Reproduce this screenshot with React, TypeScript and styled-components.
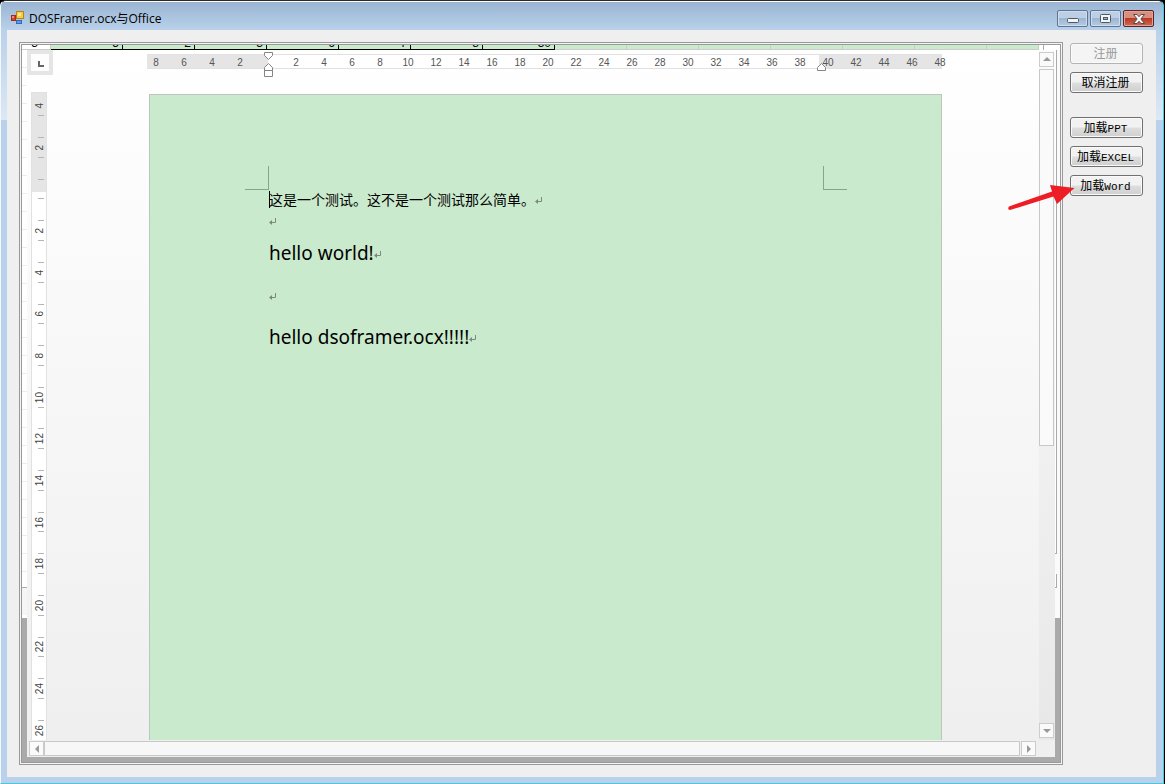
import React from "react";
import styled, { createGlobalStyle } from "styled-components";

const GlobalStyle = createGlobalStyle`
  * { box-sizing: border-box; }
  body {
    margin: 0;
    background: #000;
    font-family: "Open Sans", "Noto Sans CJK SC", sans-serif;
    color: #000;
  }
  p, h1 { margin: 0; font-weight: 400; }
`;

const Window = styled.div`
  display: flex;
  flex-direction: column;
  min-height: 100vh;
  margin-right: 1px;
  padding: 0 7px 6px 6px;
  border: 1px solid #46c8de;
  border-top-color: #2b2b2b;
  border-left-color: #f4f8fc;
  background:
    linear-gradient(#fff, #fff) 0 0 / 100% 1px no-repeat,
    linear-gradient(#99b4d1, #b9d1ea 29px) 0 0 / 100% 29px no-repeat,
    linear-gradient(#b9d1ea, #dce8f5) 0 29px / 100% 90px no-repeat,
    #b9d1ea;
  border-radius: 6px 6px 0 0;
`;

const TitleBar = styled.header`
  display: flex;
  align-items: flex-start;
  height: 29px;
  padding: 9px 2px 0 4px;
`;

const Title = styled.h1`
  flex: 1;
  margin-left: 5px;
  font-size: 12px;
  line-height: 17px;
`;

const WindowControls = styled.div`
  display: flex;
  gap: 2px;
`;

const ControlButton = styled.button<{ $close?: boolean }>`
  display: flex;
  align-items: center;
  justify-content: center;
  width: 31px;
  height: 17px;
  padding: 0;
  border: 1px solid ${(p) => (p.$close ? "#5c2320" : "#5d7590")};
  border-radius: 2px;
  box-shadow: inset 0 0 0 1px ${(p) => (p.$close ? "#dfa399" : "#cfdeee")};
  background: ${(p) =>
    p.$close
      ? "linear-gradient(#d98e80 0 45%, #b93a25 50%, #cf6a50)"
      : "linear-gradient(#bccfe4 0 45%, #9db5d0 50%, #b4cbe4)"};
`;

const Client = styled.main`
  display: flex;
  flex: 1;
  gap: 7px;
  padding: 12px 13px 12px 12px;
  background: #efefef;
`;

const Host = styled.section`
  display: flex;
  flex: 1;
  flex-direction: column;
  min-width: 0;
  border: 3px double #999;
  background: #f4f4f4;
`;

const SheetStrip = styled.div`
  display: flex;
  height: 5px;
  overflow: hidden;
  background: #fff;
  font: 12px/12px "Liberation Sans", sans-serif;
`;

const SheetCell = styled.span<{ $kind?: "header" | "blank" }>`
  display: flex;
  flex: none;
  align-items: flex-end;
  justify-content: flex-end;
  width: ${(p) => (p.$kind === "header" ? 29 : 72)}px;
  padding-right: ${(p) => (p.$kind === "header" ? 12 : 3)}px;
  border: solid ${(p) => (p.$kind ? "#ccc" : "#000")};
  border-width: 0 1px 1px 0;
  background: ${(p) => (p.$kind === "header" ? "#fff" : "#caeacd")};
`;

const SheetFill = styled.span`
  flex: 1;
  border: solid #ccc;
  border-width: 0 1px 1px 0;
  background: #caeacd;
`;

const SheetEdge = styled.span`
  flex: none;
  width: 21px;
  border-left: 4px solid #fff;
  box-shadow: inset 1px 0 #aaa;
`;

const HostBody = styled.div`
  display: flex;
  flex: 1;
`;

const Strip = styled.div`
  display: flex;
  flex-direction: column;
  width: 5px;
  background: #aaa;
`;

const StripRows = styled.div`
  height: 538px;
  border-bottom: 1px solid #aaa;
  background: repeating-linear-gradient(#fff 0 17px, #ececec 17px 18px);
`;

const StripBar = styled.div<{ $height: number }>`
  height: ${(p) => p.$height}px;
  margin-right: 3px;
  border: solid #aaa;
  border-width: 0 1px 1px 0;
  background: #fff;
`;

const StripSide = styled.div`
  display: flex;
  flex-direction: column;
  gap: 20px;
  height: 568px;
  background: #fafafa;
`;

const StripFoot = styled.div`
  height: 30px;
  border-bottom: 3px solid #fff;
  background: #f5f5f5;
`;

const Viewer = styled.div`
  display: flex;
  flex: 1;
  flex-direction: column;
  min-width: 0;
  margin-bottom: 5px;
  box-shadow: 0 5px #aaa;
`;

const Workspace = styled.div`
  display: flex;
  flex: 1;
  background: linear-gradient(#fff, #efefef);
`;

const RulerColumn = styled.div`
  display: flex;
  flex-direction: column;
  gap: 17px;
  width: 26px;
`;

const TabSelector = styled.button`
  display: flex;
  align-items: center;
  justify-content: center;
  height: 25px;
  padding: 2px 0 0 2px;
  border: 4px solid #e5e5e5;
  background: #fdfdfd;
`;

const VerticalRuler = styled.div`
  flex: 1;
  display: flex;
  flex-direction: column;
  width: 16px;
  margin-left: 4px;
  overflow: hidden;
  border: solid #e1e1e1;
  border-width: 1px 1px 0;
  background: linear-gradient(#e5e5e5 0 99px, #fff 99px);
`;

const VerticalScale = styled.div`
  display: flex;
  flex: 1;
  flex-direction: column;
  margin: -8px 0 -11px;
`;

const VerticalUnit = styled.div`
  flex: 1;
  display: flex;
  align-items: center;
  justify-content: center;
`;

const VerticalTicks = styled.span<{ $first: boolean }>`
  display: flex;
  align-items: center;
  justify-content: center;
  width: 6px;
  height: 50%;
  margin-left: 4px;
  border: solid #b5b5b5;
  border-width: ${(p) => (p.$first ? 0 : 1)}px 0 1px;
`;

const VerticalNumber = styled.span`
  margin-left: -2px;
  writing-mode: vertical-rl;
  transform: rotate(180deg);
  font: 10px/12px "Liberation Sans", sans-serif;
  color: #444;
`;

const Canvas = styled.div`
  flex: 1;
  display: flex;
  justify-content: center;
  min-width: 0;
  padding: 4px 3px 0 0;
`;

const PaperColumn = styled.div`
  display: flex;
  flex-direction: column;
  gap: 25px;
  width: 795px;
`;

const HorizontalRuler = styled.div`
  position: relative;
  display: flex;
  height: 15px;
  border: solid #e1e1e1;
  border-width: 1px 0;
  background: linear-gradient(90deg, #e5e5e5 0 121px, #fff 121px 672px, #e5e5e5 672px);
`;

const HorizontalScale = styled.div`
  display: flex;
  margin: 0 -12px 0 -5px;
`;

const HorizontalNumber = styled.span`
  width: 28px;
  text-align: center;
  font: 10px/15px "Liberation Sans", sans-serif;
  color: #555;
`;

const Marker = styled.svg<{ $x: number; $y: number }>`
  position: absolute;
  left: ${(p) => p.$x}px;
  top: ${(p) => p.$y}px;
`;

const Paper = styled.article`
  flex: 1;
  margin-left: 2px;
  padding-top: 71px;
  border: solid #bfc4bf;
  border-width: 1px 1px 0;
  background: #caeacd;
`;

const CropRow = styled.div`
  display: flex;
  justify-content: space-between;
  padding: 0 94px 0 95px;
`;

const CropMark = styled.span<{ $side: "left" | "right" }>`
  width: 24px;
  height: 24px;
  border: solid #8aa38d;
  border-width: ${(p) => (p.$side === "left" ? "0 1px 1px 0" : "0 0 1px 1px")};
`;

const TextBody = styled.div`
  padding-left: 119px;
`;

const Paragraph = styled.p<{ $large?: boolean }>`
  display: flex;
  align-items: center;
  height: ${(p) => (p.$large ? 42 : 21)}px;
  padding-bottom: ${(p) => (p.$large ? 0 : 3)}px;
  font-family: ${(p) =>
    p.$large ? '"Noto Sans", sans-serif' : '"Noto Sans CJK SC", sans-serif'};
  font-size: ${(p) => (p.$large ? 19 : 14)}px;
  line-height: 18px;
  white-space: nowrap;
`;

const Caret = styled.span`
  width: 1px;
  height: 17px;
  margin-right: -1px;
  background: #000;
`;

const ParagraphMark = styled.svg`
  margin-top: 4px;
`;

const VerticalScroll = styled.div`
  display: flex;
  flex-direction: column;
  width: 16px;
  padding: 2px 1px 2px 0;
  background: linear-gradient(#fbfbfb, #e8e8e8);
`;

const HorizontalScroll = styled.div`
  display: flex;
  height: 17px;
  padding: 1px 19px 1px 2px;
  background: #efefef;
`;

const ScrollButton = styled.button`
  display: flex;
  flex: none;
  align-items: center;
  justify-content: center;
  width: 15px;
  height: 15px;
  padding: 0;
  border: 1px solid #ccc;
  background: #fafafa;
`;

const VerticalThumb = styled.div`
  flex: 376;
  margin-top: 2px;
  border: 1px solid #c8c8c8;
  background: #fafafa;
`;

const VerticalTrack = styled.div`
  flex: 278;
`;

const HorizontalThumb = styled.div`
  flex: 1;
  margin-right: 1px;
  border: 1px solid #c8c8c8;
  background: #f7f7f7;
`;

const Actions = styled.aside`
  display: flex;
  flex-direction: column;
  gap: 24px;
  width: 73px;
  padding-top: 1px;
`;

const ActionGroup = styled.div`
  display: flex;
  flex-direction: column;
  gap: 8px;
`;

const ActionSlot = styled.div`
  position: relative;
`;

const ActionButton = styled.button`
  display: block;
  width: 100%;
  height: 21px;
  padding: 0 2px 2px 0;
  border: 1px solid #707070;
  border-radius: 3px;
  box-shadow: inset 0 0 0 1px #fafafa;
  background: linear-gradient(#f2f2f2 0 48%, #dedede 52%, #cfcfcf);
  font: 12px/17px "Noto Sans CJK SC", sans-serif;
  color: #000;
  white-space: nowrap;
  &:disabled {
    border-color: #b0b4b4;
    background: #f4f4f4;
    color: #9a9a9a;
  }
`;

const Latin = styled.span`
  font: 11px/12px "Liberation Mono", monospace;
`;

const Pointer = styled.svg`
  position: absolute;
  left: -64px;
  top: 6px;
  pointer-events: none;
`;

const horizontalLabels = Array.from({ length: 29 }, (_, i) => Math.abs(i * 2 - 8));
const verticalLabels = Array.from({ length: 16 }, (_, i) => Math.abs(i * 2 - 4));
const sheetValues = ["5", "2", "3", "6", "7", "8", "30"];

const arrows = {
  up: "M0 5 4 1 8 5Z",
  down: "M0 2 4 6 8 2Z",
  left: "M6 0 2 4 6 8Z",
  right: "M2 0 6 4 2 8Z",
};

function Scroller({ direction }: { direction: keyof typeof arrows }) {
  return (
    <ScrollButton aria-label={`Scroll ${direction}`}>
      <svg width="8" height="8" viewBox="0 0 8 8">
        <path d={arrows[direction]} fill="#999" />
      </svg>
    </ScrollButton>
  );
}

function ReturnMark() {
  return (
    <ParagraphMark width="8" height="8" viewBox="0 0 8 8" aria-hidden="true">
      <path d="M6.5 0V4.5H2" fill="none" stroke="#7c8a7e" />
      <path d="M0 4.5 3 2V7Z" fill="#7c8a7e" />
    </ParagraphMark>
  );
}

export default function App() {
  return (
    <>
      <GlobalStyle />
      <Window>
        <TitleBar>
          <svg width="13" height="15" viewBox="0 0 13 15" aria-hidden="true">
            <rect x="5.5" y="1.5" width="7" height="7" fill="#fbc93d" stroke="#b5851c" />
            <rect x="7" y="3" width="3" height="3" fill="#fde88f" />
            <rect x="0.5" y="5.5" width="4" height="5" fill="#d8402c" stroke="#a52a1c" />
            <rect x="1" y="6" width="2" height="2" fill="#f08a78" />
            <rect x="5.5" y="10.5" width="5" height="3" fill="#5c9bea" stroke="#3568b8" />
          </svg>
          <Title>DOSFramer.ocx与Office</Title>
          <WindowControls>
            <ControlButton aria-label="Minimize">
              <svg width="12" height="9" viewBox="0 0 12 9">
                <rect x="0.5" y="4.5" width="11" height="4" rx="1" fill="#f4f4f4" stroke="#4c5866" />
              </svg>
            </ControlButton>
            <ControlButton aria-label="Restore">
              <svg width="11" height="9" viewBox="0 0 11 9">
                <rect x="0.5" y="0.5" width="10" height="8" rx="1" fill="#f4f4f4" stroke="#4c5866" />
                <rect x="3.5" y="3.5" width="4" height="2" fill="#9db5d0" stroke="#4c5866" />
              </svg>
            </ControlButton>
            <ControlButton $close aria-label="Close">
              <svg width="12" height="10" viewBox="0 0 12 10">
                <path
                  d="M0.5 0.5H4L6 2.7 8 0.5H11.5L7.9 5 11.5 9.5H8L6 7.3 4 9.5H0.5L4.1 5Z"
                  fill="#f6f6f6"
                  stroke="#54494f"
                />
              </svg>
            </ControlButton>
          </WindowControls>
        </TitleBar>

        <Client>
          <Host>
            <SheetStrip aria-hidden="true">
              <SheetCell $kind="header">3</SheetCell>
              {sheetValues.map((value) => (
                <SheetCell key={value}>{value}</SheetCell>
              ))}
              {[0, 1, 2, 3, 4, 5].map((i) => (
                <SheetCell key={i} $kind="blank" />
              ))}
              <SheetFill />
              <SheetEdge />
            </SheetStrip>

            <HostBody>
              <Strip>
                <StripRows />
                <StripFoot />
              </Strip>

              <Viewer>
                <Workspace>
                  <RulerColumn>
                    <TabSelector aria-label="Tab stop">
                      <svg width="6" height="6" viewBox="0 0 6 6">
                        <path d="M1 0V5H6" fill="none" stroke="#666" strokeWidth="2" />
                      </svg>
                    </TabSelector>
                    <VerticalRuler>
                      <VerticalScale>
                        {verticalLabels.map((n, i) => (
                          <VerticalUnit key={i}>
                            <VerticalTicks $first={i === 0}>
                              {n > 0 && <VerticalNumber>{n}</VerticalNumber>}
                            </VerticalTicks>
                          </VerticalUnit>
                        ))}
                      </VerticalScale>
                    </VerticalRuler>
                  </RulerColumn>

                  <Canvas>
                    <PaperColumn>
                      <HorizontalRuler>
                        <HorizontalScale>
                          {horizontalLabels.map((n, i) => (
                            <HorizontalNumber key={i}>{n > 0 ? n : ""}</HorizontalNumber>
                          ))}
                        </HorizontalScale>
                        <Marker $x={117} $y={-3} width="9" height="25" viewBox="0 0 9 25">
                          <path
                            d="M0.5 0.5H8.5V3.5L4.5 7.5 0.5 3.5ZM4.5 11.5 8.5 15.5V24.5H0.5V15.5ZM0.5 18.5H8.5"
                            fill="#fff"
                            stroke="#858585"
                          />
                        </Marker>
                        <Marker $x={670} $y={8} width="9" height="8" viewBox="0 0 9 8">
                          <path d="M4.5 0.5 8.5 4.5V7.5H0.5V4.5Z" fill="#fff" stroke="#858585" />
                        </Marker>
                      </HorizontalRuler>

                      <Paper>
                        <CropRow>
                          <CropMark $side="left" />
                          <CropMark $side="right" />
                        </CropRow>
                        <TextBody>
                          <Paragraph>
                            <Caret />
                            这是一个测试。这不是一个测试那么简单。
                            <ReturnMark />
                          </Paragraph>
                          <Paragraph>
                            <ReturnMark />
                          </Paragraph>
                          <Paragraph $large>
                            hello world!
                            <ReturnMark />
                          </Paragraph>
                          <Paragraph $large>
                            <ReturnMark />
                          </Paragraph>
                          <Paragraph $large>
                            hello dsoframer.ocx!!!!!
                            <ReturnMark />
                          </Paragraph>
                        </TextBody>
                      </Paper>
                    </PaperColumn>
                  </Canvas>

                  <VerticalScroll>
                    <Scroller direction="up" />
                    <VerticalThumb />
                    <VerticalTrack />
                    <Scroller direction="down" />
                  </VerticalScroll>
                </Workspace>

                <HorizontalScroll>
                  <Scroller direction="left" />
                  <HorizontalThumb />
                  <Scroller direction="right" />
                </HorizontalScroll>
              </Viewer>

              <Strip>
                <StripSide>
                  <StripBar $height={504} />
                  <StripBar $height={14} />
                </StripSide>
              </Strip>
            </HostBody>
          </Host>

          <Actions>
            <ActionGroup>
              <ActionButton disabled>注册</ActionButton>
              <ActionButton>取消注册</ActionButton>
            </ActionGroup>
            <ActionGroup>
              <ActionButton>
                加载<Latin>PPT</Latin>
              </ActionButton>
              <ActionButton>
                加载<Latin>EXCEL</Latin>
              </ActionButton>
              <ActionSlot>
                <ActionButton>
                  加载<Latin>Word</Latin>
                </ActionButton>
                <Pointer width="70" height="32" viewBox="1006 181 70 32" aria-hidden="true">
                  <path
                    d="M1009 206.500 1052 191.500 1050 185 1074.500 188 1057 204 1053.500 196.500 1010 210Q1007 209.500 1009 206.500Z"
                    fill="#ee1c25"
                  />
                </Pointer>
              </ActionSlot>
            </ActionGroup>
          </Actions>
        </Client>
      </Window>
    </>
  );
}
